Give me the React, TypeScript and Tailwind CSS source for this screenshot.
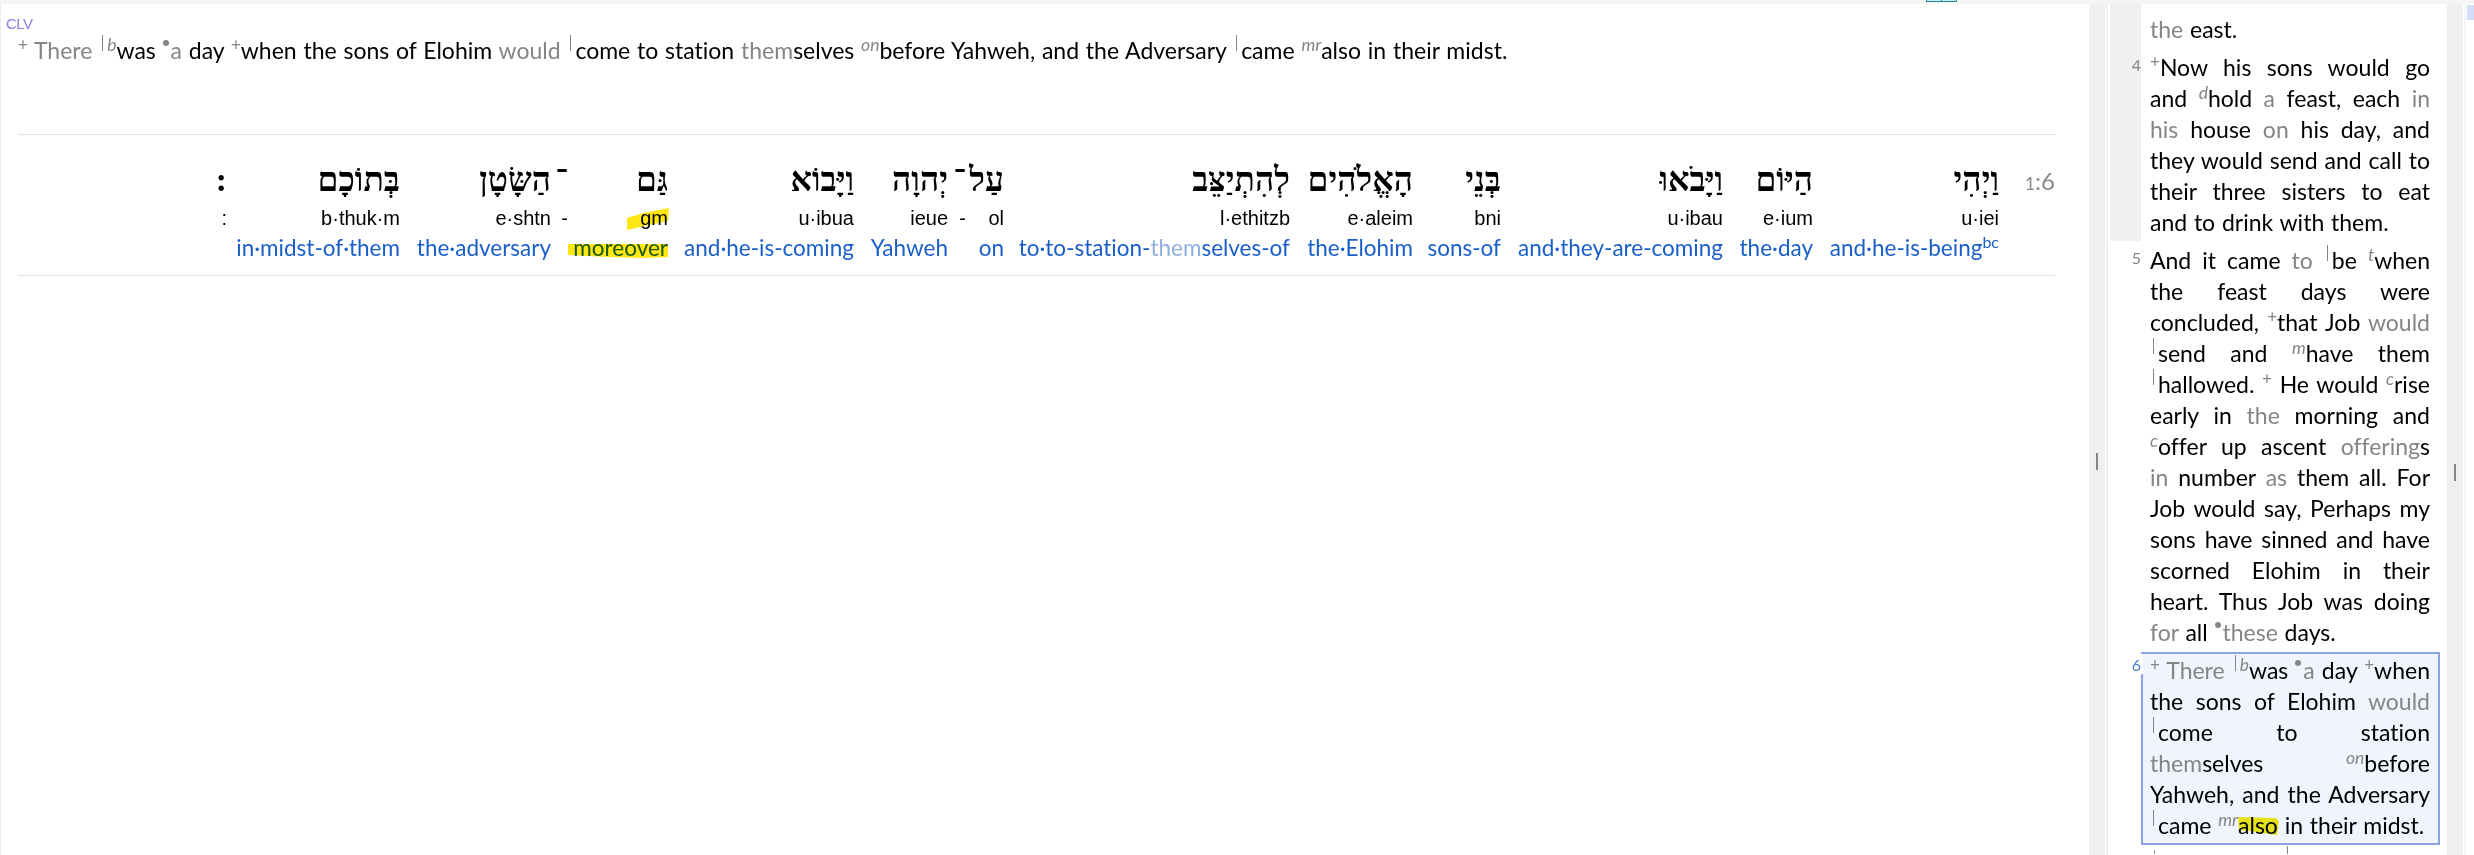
import React from "react";

/* Inline markup: [x] implied word, {x} italic superscript, <x> upright superscript, #x# marked word */
function Rich({ text }: { text: string }) {
  const parts = text.split(/(\[[^\]]*\]|\{[^}]*\}|<[^>]*>|#[^#]*#)/).filter(Boolean);
  return (
    <>
      {parts.map((p, i) => {
        const inner = p.slice(1, -1);
        if (p[0] === "[") return <span key={i} className="text-[#858585]">{inner}</span>;
        if (p[0] === "{")
          return <span key={i} className="align-[8px] text-[17.5px] leading-0 italic text-[#858585]">{inner}</span>;
        if (p === "<|>")
          return <span key={i} className="mr-[3px] inline-block w-[5px] pl-[3px] align-[8px] leading-0"><span className="inline-block h-[16px] w-px bg-[#858585]" /></span>;
        if (p === "<•>")
          return <span key={i} className="mr-[2px] inline-block size-[6px] rounded-full bg-[#858585] align-[13px]" />;
        if (p[0] === "<")
          return <span key={i} className="align-[8px] text-[17px] leading-0 text-[#858585]">{inner}</span>;
        if (p[0] === "#")
          return (
            <span key={i} className="relative">
              {inner}
              <svg className="absolute left-0 top-[6px] h-[19px] w-[41px] mix-blend-multiply" viewBox="0 0 41 19">
                <path d="M0 0 38 1 41 4 39 18 30 17 12 14 1 13Z" fill="#f4ec1c" />
              </svg>
            </span>
          );
        return <React.Fragment key={i}>{p}</React.Fragment>;
      })}
    </>
  );
}

function Verse({ num, lines, active }: { num?: string; lines: string[]; active?: boolean }) {
  return (
    <div className="flex">
      <div className={"w-[31px] shrink-0 text-right text-[16px] leading-[16px] " + (active ? "pt-[2px] text-[#4a7cc9]" : "pt-[5px] text-[#858585]")}>
        {num}
      </div>
      <div className="ml-[9px] w-[280px]">
        {lines.map((l, i) => (
          <div
            key={i}
            className={"h-[31px] leading-[31px] whitespace-nowrap " + (i < lines.length - 1 ? "[text-align-last:justify]" : "")}
          >
            <Rich text={l} />
          </div>
        ))}
      </div>
    </div>
  );
}

const V4 = ["<+>Now his sons would go", "and {d}hold [a] feast, each [in]", "[his] house [on] his day, and", "they would send and call to", "their three sisters to eat", "and to drink with them."];
const V5 = [
  "And it came [to] <|>be {t}when",
  "the feast days were",
  "concluded, <+>that Job [would]",
  "<|>send and {m}have them",
  "<|>hallowed. <+> He would {c}rise",
  "early in [the] morning and",
  "{c}offer up ascent [offering]s",
  "[in] number [as] them all. For",
  "Job would say, Perhaps my",
  "sons have sinned and have",
  "scorned Elohim in their",
  "heart. Thus Job was doing",
  "[for] all <•>[these] days.",
];
const V6 = [
  "<+> [There] <|>{b}was <•>[a] day <+>when",
  "the sons of Elohim [would]",
  "<|>come to station",
  "[them]selves {on}before",
  "Yahweh, and the Adversary",
  "<|>came {mr}#also# in their midst.",
];
const MAIN =
  "<+> [There] <|>{b}was <•>[a] day <+>when the sons of Elohim [would] <|>come to station [them]selves {on}before Yahweh, and the Adversary <|>came {mr}also in their midst.";

type Word = { he: string; tr: string; en?: React.ReactNode; w: string; mark?: boolean };

const WORDS: Word[] = [
  { he: ":", tr: ":", w: "w-[209px]" },
  { he: "בְּתוֹכָם", tr: "b·thuk·m", en: "in·midst-of·them", w: "w-[173px]" },
  { he: "הַשָּׂטָן", tr: "e·shtn", en: "the·adversary", w: "w-[151px]" },
  { he: "־", tr: "-", w: "w-[17px]" },
  { he: "גַּם", tr: "gm", en: "moreover", w: "w-[100px]", mark: true },
  { he: "וַיָּבוֹא", tr: "u·ibua", en: "and·he-is-coming", w: "w-[186px]" },
  { he: "יְהוָה", tr: "ieue", en: "Yahweh", w: "w-[94px]" },
  { he: "־", tr: "-", w: "w-[18px]" },
  { he: "עַל", tr: "ol", en: "on", w: "w-[38px]" },
  { he: "לְהִתְיַצֵּב", tr: "l·ethitzb", en: <>to·to-station-<span className="text-[#8fb0df]">them</span>selves-of</>, w: "w-[286px]" },
  { he: "הָאֱלֹהִים", tr: "e·aleim", en: "the·Elohim", w: "w-[123px]" },
  { he: "בְּנֵי", tr: "bni", en: "sons-of", w: "w-[88px]" },
  { he: "וַיָּבֹאוּ", tr: "u·ibau", en: "and·they-are-coming", w: "w-[222px]" },
  { he: "הַיּוֹם", tr: "e·ium", en: "the·day", w: "w-[90px]" },
  { he: "וַיְהִי", tr: "u·iei", en: <>and·he-is-being<span className="align-[8px] text-[16px] leading-0">bc</span></>, w: "w-[186px]" },
];

function WordColumn({ word }: { word: Word }) {
  return (
    <div className={"relative flex shrink-0 flex-col items-end whitespace-nowrap " + word.w}>
      <div dir="rtl" className="h-[45px] font-['Liberation_Serif',serif] text-[33.5px] leading-[44px] font-bold text-black">{word.he}</div>
      <div className="h-[29px] font-['Liberation_Sans',sans-serif] text-[20px] leading-[30px] text-black">{word.tr}</div>
      <div className="h-[31px] text-[22.5px] leading-[32px] text-[#1a5fc8]">{word.en}</div>
      {word.mark && (
        <svg className="absolute top-[50px] -right-px h-[52px] w-[102px] mix-blend-multiply" viewBox="0 0 102 52">
          <path d="M60 10 76 5 102 0 101 13 82 17 60 22Z" fill="#ffe713" />
          <path d="M1 36H101V49L76 50 40 49 1 47Z" fill="#ffe713" />
        </svg>
      )}
    </div>
  );
}

export default function App() {
  return (
    <div className="relative flex h-[855px] w-[2474px] flex-col overflow-hidden bg-white font-['Lato',sans-serif] text-[23px] [word-spacing:0.9px] text-black [font-variant-ligatures:none]">
      <div className="flex h-[4px] shrink-0 bg-[#f5f5f5] pl-[1926px]">
        <div className="h-[2px] w-[16px] border border-t-0 border-[#2c8795] bg-[#c4f3f5]" />
        <div className="h-[2px] w-[15px] border border-t-0 border-l-0 border-[#2c8795] bg-[#c4f3f5]" />
      </div>
      <div className="flex min-h-0 flex-1">
        <main className="w-[2089px] border-l border-[#ededed]">
          <div className="h-[20px] pt-[11px] pl-[5px] font-['Liberation_Sans',sans-serif] text-[15px] leading-[18px] tracking-[-0.5px] text-[#8a82e0]">CLV</div>
          <div className="ml-[17px] h-[110px] pt-[10px] leading-[32px] whitespace-nowrap"><Rich text={MAIN} /></div>
          <div className="ml-[17px] flex h-[142px] w-[2037px] border-y border-[#e0e3e6] pt-[23px]">
            {WORDS.map((w, i) => <WordColumn key={i} word={w} />)}
            <div className="w-[56px] pt-[5px] text-right text-[24px] leading-[36px] text-[#8a8a8a]"><span className="text-[18px]">1</span>:6</div>
          </div>
        </main>
        <div className="flex w-[16px] justify-center bg-[#efefef] pt-[449px]"><div className="h-[17px] w-[2px] bg-[#858585]" /></div>
        <div className="ml-px w-[2px] bg-[#f0f0f0]" />
        <aside className="relative ml-[2px] w-[337px]">
          <div className="absolute top-0 left-0 h-[237px] w-[31px] bg-[#f0f0f0]" />
          <div className="absolute top-[648px] left-[31px] h-[193px] w-[299px] border-2 border-[#89a3e3] bg-[#f0f4fd]" />
          <div className="absolute top-[650px] left-[20px] h-[20px] w-[13px] bg-white" />
          <div className="relative flex flex-col gap-[7px] pt-[10px]">
            <Verse lines={["[the] east."]} />
            <Verse num="4" lines={V4} />
            <Verse num="5" lines={V5} />
            <Verse num="6" lines={V6} active />
          </div>
          <div className="flex pt-[5px] pl-[44px]">
            <div className="mt-[4px] h-[4px] w-px bg-[#8590b0]" />
            <div className="ml-[132px] h-[8px] w-px bg-[#858585]" />
          </div>
        </aside>
        <div className="flex w-[16px] justify-center bg-[#efefef] pt-[460px]"><div className="h-[17px] w-[2px] bg-[#858585]" /></div>
        <div className="ml-px w-[2px] bg-[#f5f5f5]" />
        <div className="flex-1 pt-px pl-px"><div className="h-[15px] bg-[#d3ddf8]" /></div>
      </div>
    </div>
  );
}
